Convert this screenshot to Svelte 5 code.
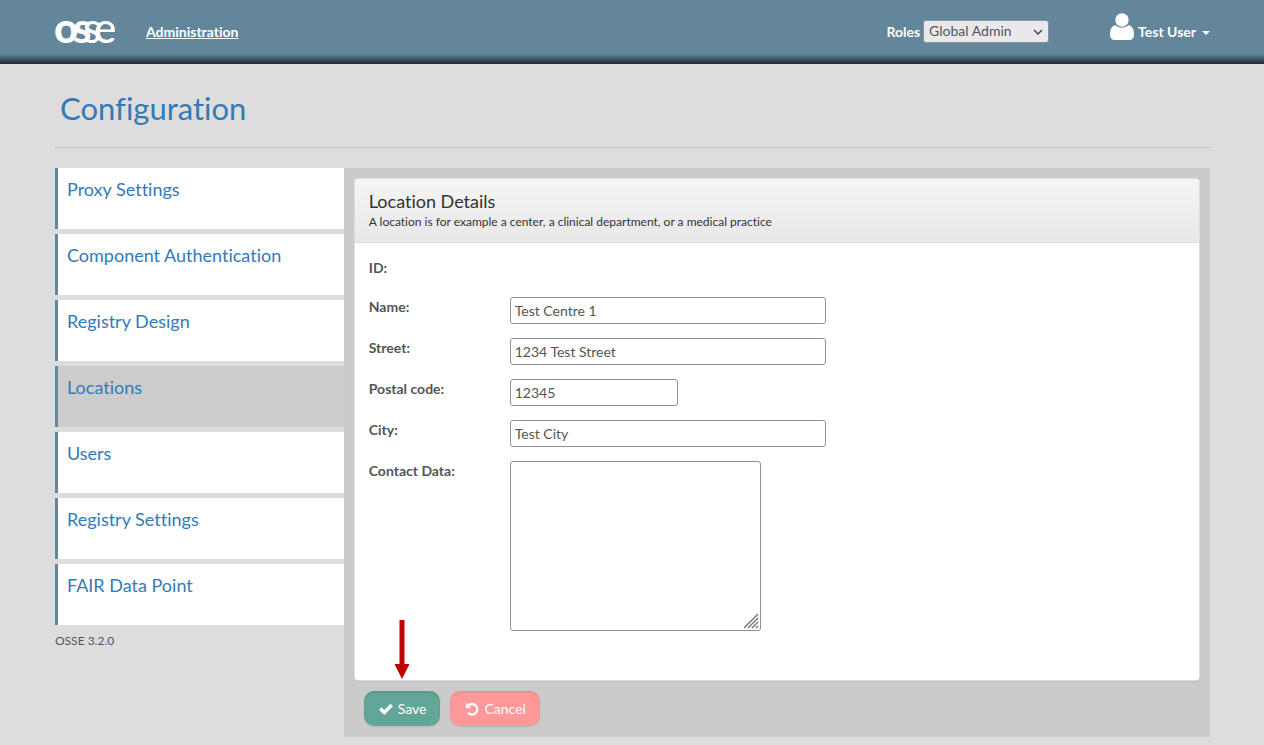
<script>
  const menu = [
    'Proxy Settings',
    'Component Authentication',
    'Registry Design',
    'Locations',
    'Users',
    'Registry Settings',
    'FAIR Data Point'
  ];

  let active = 'Locations';
  let role = 'Global Admin';
  let location = {
    name: 'Test Centre 1',
    street: '1234 Test Street',
    postalCode: '12345',
    city: 'Test City',
    contact: ''
  };
</script>

<header class="navbar">
  <div class="container nav-inner">
    <a class="brand" href="#home" aria-label="OSSE home">
      <svg width="61" height="30" viewBox="0 0 61 30" fill="#fff" aria-hidden="true">
        <text class="glyphs" y="26" x="-1 18 28 39"><tspan class="black">o</tspan><tspan class="bold">s</tspan><tspan class="medium">se</tspan></text>
      </svg>
    </a>
    <a class="nav-link" href="#administration">Administration</a>
    <div class="roles">
      <label for="role">Roles</label>
      <span class="select-wrap">
        <select id="role" bind:value={role}>
          <option>Global Admin</option>
        </select>
        <svg class="chevron" width="10" height="6" viewBox="0 0 10 6" fill="none" stroke="#4a4a4a" stroke-width="1.5" aria-hidden="true">
          <path d="M1 1l4 4 4-4" />
        </svg>
      </span>
    </div>
    <button class="user" type="button">
      <svg width="24" height="28" viewBox="0 0 24 28" fill="#fff" aria-hidden="true">
        <circle cx="12" cy="7" r="6.700" />
        <path d="M5.500 12.200c3.800 3.300 9.200 3.300 13 0 4 0.500 5.500 4.500 5.500 9.500 0 3.500-1.800 5.300-5 5.300H5c-3.200 0-5-1.800-5-5.300 0-5 1.500-9 5.500-9.500z" />
      </svg>
      <span>Test User</span>
      <span class="caret"></span>
    </button>
  </div>
</header>

<main class="container">
  <h1>Configuration</h1>

  <div class="layout">
    <aside>
      <nav>
        {#each menu as item}
          <a
            href="#{item.toLowerCase().replaceAll(' ', '-')}"
            class:active={item === active}
            on:click={() => (active = item)}
          >{item}</a>
        {/each}
      </nav>
      <p class="version">OSSE 3.2.0</p>
    </aside>

    <form class="content" on:submit|preventDefault>
      <section class="panel">
        <div class="panel-heading">
          <h2>Location Details</h2>
          <p>A location is for example a center, a clinical department, or a medical practice</p>
        </div>
        <div class="panel-body">
          <div class="row id-row">
            <span class="label">ID:</span>
          </div>
          <div class="row">
            <label for="name">Name:</label>
            <input id="name" type="text" bind:value={location.name} />
          </div>
          <div class="row">
            <label for="street">Street:</label>
            <input id="street" type="text" bind:value={location.street} />
          </div>
          <div class="row">
            <label for="postal">Postal code:</label>
            <input id="postal" class="short" type="text" bind:value={location.postalCode} />
          </div>
          <div class="row">
            <label for="city">City:</label>
            <input id="city" type="text" bind:value={location.city} />
          </div>
          <div class="row">
            <label for="contact">Contact Data:</label>
            <div class="area">
              <textarea id="contact" bind:value={location.contact}></textarea>
              <svg class="grip" width="16" height="16" viewBox="0 0 16 16" stroke="#6e6e6e" stroke-width="1.300" aria-hidden="true">
                <path d="M1 15L15 1M5 15L15 5M9 15l6-6M13 15l2-2" />
              </svg>
            </div>
          </div>
        </div>
        <svg class="pointer" width="16" height="60" viewBox="0 0 16 60" fill="#c00000" aria-hidden="true">
          <path d="M5.500 0h5v44H15.500L8 59 0.500 44H5.500z" />
        </svg>
      </section>

      <div class="actions">
        <button class="btn save" type="submit">
          <svg width="14" height="12" viewBox="0 0 14 12" fill="none" stroke="#fff" stroke-width="3.400" aria-hidden="true">
            <path d="M1.300 5.500l4 4L12.700 2" />
          </svg>
          Save
        </button>
        <button class="btn cancel" type="button">
          <svg width="14" height="14" viewBox="0 0 14 14" aria-hidden="true">
            <path d="M2.800 4A5.300 5.300 0 1 1 3 10.800" fill="none" stroke="#fff" stroke-width="2.300" />
            <path d="M0.800 0.500v5.800h5.800z" fill="#fff" />
          </svg>
          Cancel
        </button>
      </div>
    </form>
  </div>
</main>

<style>
  :global(body) {
    margin: 0;
    background: #ddd;
    color: #555;
    font: 14px/20px Lato, sans-serif;
    font-variant-ligatures: none;
  }
  .container {
    margin: 0 54px 0 55px;
  }
  a {
    color: #337ab7;
    text-decoration: none;
  }
  .navbar {
    background: linear-gradient(#63869a 0, #63869a 54px, #1d272d 64px);
    color: #fff;
    font-weight: 700;
  }
  .nav-inner {
    display: flex;
    align-items: center;
    height: 64px;
  }
  .brand {
    display: flex;
    margin-right: 30px;
  }
  .brand svg {
    overflow: visible;
  }
  .glyphs {
    font-family: Lato, sans-serif;
    font-size: 42px;
  }
  .medium {
    font-weight: 500;
  }
  .bold {
    font-weight: 700;
  }
  .black {
    font-weight: 900;
  }
  .nav-link {
    color: #fff;
    text-decoration: underline;
  }
  .roles {
    display: flex;
    align-items: center;
    gap: 3px;
    margin-left: auto;
  }
  .select-wrap {
    position: relative;
    display: flex;
    margin-bottom: 2px;
  }
  select {
    appearance: none;
    width: 126px;
    height: 23px;
    padding: 0 5px;
    border: 1px solid #8f8f9d;
    border-radius: 3px;
    background: #e9e9ed;
    color: #555;
    font: 14px/20px Lato, sans-serif;
  }
  .chevron {
    position: absolute;
    top: 9px;
    right: 6px;
    pointer-events: none;
  }
  .user {
    display: flex;
    align-items: center;
    gap: 4px;
    margin-left: 61px;
    padding: 0;
    border: 0;
    background: none;
    color: #fff;
    font: 700 14px/20px Lato, sans-serif;
    cursor: pointer;
  }
  .user svg {
    margin-bottom: 10px;
  }
  .caret {
    margin: 2px 0 0 2px;
    border: 4px solid transparent;
    border-top-color: #fff;
    border-bottom: 0;
  }
  h1 {
    margin: 24px 0 20px;
    padding: 0 5px 18px;
    border-bottom: 1px solid #c1c1c1;
    color: #337ab7;
    font-size: 31px;
    font-weight: 400;
    line-height: 41px;
  }
  .layout {
    display: flex;
    align-items: flex-start;
  }
  aside {
    flex: 0 0 25%;
  }
  nav {
    display: flex;
    flex-direction: column;
    gap: 5px;
  }
  nav a {
    height: 43px;
    padding: 9px;
    border-left: 3px solid #63869a;
    background: #fff;
    font-size: 18px;
    line-height: 25px;
  }
  nav a.active {
    background: #ccc;
  }
  .version {
    margin: 6px 0;
    font-size: 12px;
  }
  .content {
    flex: 1;
    min-width: 0;
    padding: 10px;
    background: #cbcbcb;
  }
  .panel {
    position: relative;
    border: 1px solid #ddd;
    border-radius: 4px;
    background: #fff;
    box-shadow: 0 1px 1px rgba(0, 0, 0, 0.05);
  }
  .panel-heading {
    padding: 11px 14px 10px;
    border-bottom: 1px solid #ddd;
    border-radius: 3px 3px 0 0;
    background: linear-gradient(#f5f5f5, #e8e8e8);
    color: #333;
  }
  h2 {
    margin: 0;
    font-size: 18px;
    font-weight: 400;
    line-height: 22px;
  }
  .panel-heading p {
    margin: 0;
    font-size: 12px;
  }
  .panel-body {
    display: flex;
    flex-direction: column;
    gap: 14px;
    padding: 15px 14px 49px;
  }
  .row {
    display: flex;
    align-items: flex-start;
  }
  .id-row {
    margin-bottom: 5px;
  }
  .row label,
  .label {
    flex: 0 0 141px;
    font-weight: 700;
  }
  input,
  textarea {
    box-sizing: border-box;
    border: 1px solid #8f8f9d;
    border-radius: 3px;
    background: #fff;
    color: #555;
    font: 14px/20px Lato, sans-serif;
  }
  input {
    width: 316px;
    height: 27px;
    padding: 2px 4px;
  }
  input.short {
    width: 168px;
  }
  .area {
    position: relative;
  }
  textarea {
    display: block;
    width: 251px;
    height: 170px;
    padding: 2px 4px;
    resize: none;
  }
  .grip {
    position: absolute;
    right: 2px;
    bottom: 2px;
  }
  .pointer {
    position: absolute;
    bottom: 0;
    left: 39px;
  }
  .actions {
    display: flex;
    gap: 10px;
    padding: 10px 10px 1px;
  }
  .btn {
    display: flex;
    align-items: center;
    gap: 5px;
    height: 35px;
    padding: 0 14px 0 15px;
    border: 0;
    border-radius: 10px;
    box-shadow: inset 0 2px 2px rgba(0, 0, 0, 0.08), 0 1px 2px rgba(0, 0, 0, 0.1);
    color: #fff;
    font: 14px/20px Lato, sans-serif;
    cursor: pointer;
  }
  .save {
    background: #62a698;
  }
  .cancel {
    background: #ff9999;
  }
</style>
